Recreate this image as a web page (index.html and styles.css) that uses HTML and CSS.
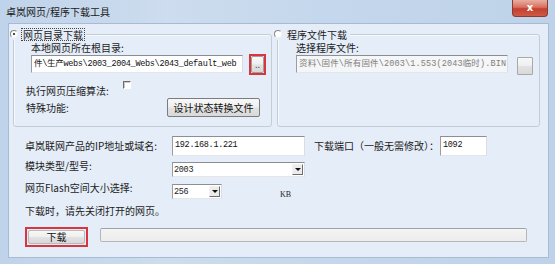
FILE: index.html
```html
<!DOCTYPE html>
<html lang="zh-CN">
<head>
<meta charset="utf-8">
<title>卓岚网页/程序下载工具</title>
<link rel="stylesheet" href="styles.css">
</head>
<body>
<div class="window">
  <div class="titlebar">
    <span class="title">卓岚网页/程序下载工具</span>
    <span class="close">x</span>
  </div>
  <div class="client">
    <div class="groups">
      <fieldset class="group group-left">
        <legend><span class="radio on"></span><span class="legend-text focus">网页目录下载</span></legend>
        <div class="gbody">
          <div class="lbl indent top-lbl">本地网页所在根目录:</div>
          <div class="pathrow indent">
            <div class="textbox path">件\生产webs\2003_2004_Webs\2043_default_web</div>
            <div class="redmark small"><div class="btn dots">..</div></div>
          </div>
          <div class="chkrow">
            <span class="lbl chk-lbl">执行网页压缩算法:</span>
            <span class="check"></span>
          </div>
          <div class="specrow">
            <span class="lbl spec-lbl">特殊功能:</span>
            <div class="btn convert">设计状态转换文件</div>
          </div>
        </div>
      </fieldset>
      <fieldset class="group group-right">
        <legend><span class="radio"></span><span class="legend-text">程序文件下载</span></legend>
        <div class="gbody gbody-right">
          <div class="lbl top-lbl">选择程序文件:</div>
          <div class="pathrow">
            <div class="textbox path disabled">资料\固件\所有固件\2003\1.553(2043临时).BIN</div>
            <div class="btn browse"></div>
          </div>
        </div>
      </fieldset>
    </div>

    <div class="form">
      <div class="row row-ip">
        <span class="lbl flabel">卓岚联网产品的IP地址或域名:</span>
        <div class="textbox ip">192.168.1.221</div>
        <span class="lbl port-lbl">下载端口（一般无需修改）：</span>
        <div class="textbox port">1092</div>
      </div>
      <div class="row row-model">
        <span class="lbl flabel up">模块类型/型号:</span>
        <div class="combo model"><span class="val">2003</span><span class="arrow"></span></div>
      </div>
      <div class="row row-flash">
        <span class="lbl flabel up">网页Flash空间大小选择:</span>
        <div class="combo flash"><span class="val">256</span><span class="arrow"></span></div>
        <span class="lbl kb">KB</span>
      </div>
      <div class="lbl note">下载时，请先关闭打开的网页。</div>
      <div class="row row-go">
        <div class="redmark big"><div class="btn go">下载</div></div>
        <div class="progress"></div>
      </div>
    </div>
  </div>
</div>
</body>
</html>
```
FILE: styles.css
```css
* { box-sizing: border-box; }
body {
  margin: 0;
  font-family: "Noto Sans CJK SC", sans-serif;
  font-size: 10px;
  color: #1c1c1c;
  background: #fff;
}
.window {
  width: 555px;
  height: 264px;
  display: flex;
  flex-direction: column;
  background: linear-gradient(90deg, #bfd3ea 0%, #cddcee 30%, #c4d7ec 60%, #bed2e9 100%);
}
.titlebar {
  height: 23px;
  flex: none;
  display: flex;
  align-items: flex-start;
  padding-left: 6px;
}
.title {
  margin-top: 6px;
  line-height: 12px;
  font-size: 10px;
  color: #1a1a1a;
}
.close {
  margin-left: auto;
  margin-right: 7px;
  width: 36px;
  height: 17px;
  border: 1px solid #8a3b33;
  border-top: 0;
  border-radius: 0 0 4px 4px;
  background: linear-gradient(#e9aea2 0%, #d8705f 45%, #c2402f 55%, #cf5a45 100%);
  color: #fff;
  font-family: "DejaVu Sans", sans-serif;
  font-weight: bold;
  font-size: 10px;
  line-height: 15px;
  text-align: center;
}
.client {
  flex: 1;
  margin: 0 6px 6px 8px;
  border: 1px solid #a7bbd2;
  background: #e5edf8;
  padding: 4px 0 0 4px;
}
.lbl { line-height: 12px; white-space: nowrap; }

/* group boxes */
.groups { display: flex; gap: 5px; }
.group {
  margin: 0;
  padding: 0;
  height: 99px;
  border: 1px solid #c3cdd7;
  border-radius: 3px;
  box-shadow: inset 1px 1px 0 #f6f9fc;
}
.group-left { width: 259px; }
.group-right { width: 263px; }
legend {
  margin-left: -4px;
  padding: 0 2px 0 0;
  height: 12px;
  display: flex;
  align-items: center;
  background: #e5edf8;
}
.radio {
  width: 8px;
  height: 8px;
  border-radius: 50%;
  border: 1px solid;
  border-color: #8a8a8a #f4f4f4 #f4f4f4 #8a8a8a;
  background: #fff;
  display: flex;
  align-items: center;
  justify-content: center;
}
.radio.on::after {
  content: "";
  width: 2px;
  height: 2px;
  border-radius: 50%;
  background: #111;
}
.legend-text {
  margin-left: 4px;
  line-height: 11px;
  padding: 0 1px;
}
.legend-text.focus { outline: 1px dotted #444; outline-offset: 0; }

.gbody { padding-left: 12px; }
.gbody-right { padding-left: 18px; }
.indent { margin-left: 5px; }
.top-lbl { margin-top: 2px; }
.pathrow { display: flex; align-items: flex-start; margin-top: 1px; }

.textbox {
  height: 18px;
  background: #fff;
  border: 1px solid;
  border-color: #8b8e93 #dadde1 #e4e6ea #9a9da2;
  font-family: "Liberation Mono", "Noto Sans CJK SC", monospace;
  font-size: 8.5px;
  letter-spacing: -0.3px;
  line-height: 12px;
  padding: 2px 0 0 2px;
  white-space: nowrap;
  overflow: hidden;
  color: #111;
}
.path { width: 212px; }
.disabled { background: #f5f6f7; color: #808080; letter-spacing: 0.15px; }

.btn {
  border: 1px solid #7c7c7c;
  border-radius: 2px;
  background: linear-gradient(#f8f8f8 0%, #efefef 48%, #e2e2e2 52%, #d9d9d9 100%);
  display: flex;
  align-items: center;
  justify-content: center;
  line-height: 12px;
  white-space: nowrap;
  color: #111;
}
.redmark { border: 2px solid #d8363f; }
.redmark.small { margin-left: 6px; margin-top: -1px; width: 17px; height: 21px; padding: 0; }
.dots { width: 13px; height: 17px; font-size: 9px; line-height: 9px; color: #555; border-color: #a0a0a0; align-items: flex-end; padding-bottom: 3px; }
.browse { margin-left: 9px; margin-top: 2px; width: 16px; height: 18px; border-color: #a8a8a8; border-radius: 1px; }

.chkrow { display: flex; align-items: flex-start; height: 16px; margin-top: 6px; }
.chk-lbl { margin-top: 4px; width: 97px; }
.check {
  width: 8px;
  height: 8px;
  border: 1px solid;
  border-color: #6d6d6d #ffffff #ffffff #6d6d6d;
  box-shadow: inset 1px 1px 0 #c9c9c9;
  background: #fff;
}
.specrow { display: flex; align-items: center; margin-top: 1px; }
.spec-lbl { width: 141px; }
.convert { width: 93px; height: 19px; font-size: 10px; }

/* lower form */
.form { padding-left: 12px; }
.row { display: flex; align-items: center; }
.flabel { width: 147px; }
.row-ip { margin-top: 9px; height: 20px; }
.ip { width: 133px; height: 20px; }
.port-lbl { margin-left: 9px; width: 126px; }
.port { width: 47px; height: 20px; }

.row-model { margin-top: 6px; height: 15px; align-items: flex-start; }
.row-flash { margin-top: 7px; height: 15px; align-items: flex-start; }
.up { margin-top: -2px; }
.combo {
  height: 15px;
  background: #fff;
  border: 1px solid;
  border-color: #8b8e93 #dadde1 #e4e6ea #9a9da2;
  display: flex;
  align-items: center;
  justify-content: space-between;
  font-family: "Liberation Mono", "Noto Sans CJK SC", monospace;
  font-size: 8.5px;
  letter-spacing: -0.3px;
  padding-left: 1px;
  padding-right: 1px;
}
.model { width: 133px; }
.flash { width: 50px; }
.arrow {
  width: 11px;
  height: 11px;
  border: 1px solid;
  border-color: #f2f2f2 #6d6d6d #6d6d6d #f2f2f2;
  background: #ececec;
  display: flex;
  align-items: center;
  justify-content: center;
}
.arrow::after {
  content: "";
  border-left: 3px solid transparent;
  border-right: 3px solid transparent;
  border-top: 3px solid #111;
}
.kb { margin-left: 58px; margin-top: 5px; font-family: "Liberation Serif", serif; font-size: 8px; }
.note { margin-top: 6px; }

.row-go { margin-top: 10px; align-items: flex-start; }
.redmark.big { width: 63px; height: 20px; padding: 1px; }
.go { width: 100%; height: 100%; border-color: #b9b9b9; font-size: 10px; }
.progress {
  margin-left: 12px;
  margin-top: 1px;
  width: 427px;
  height: 14px;
  border: 1px solid #b5b7ba;
  border-top-color: #9fa2a6;
  background: linear-gradient(#f4f4f4, #ececec);
  border-radius: 2px;
}
```
